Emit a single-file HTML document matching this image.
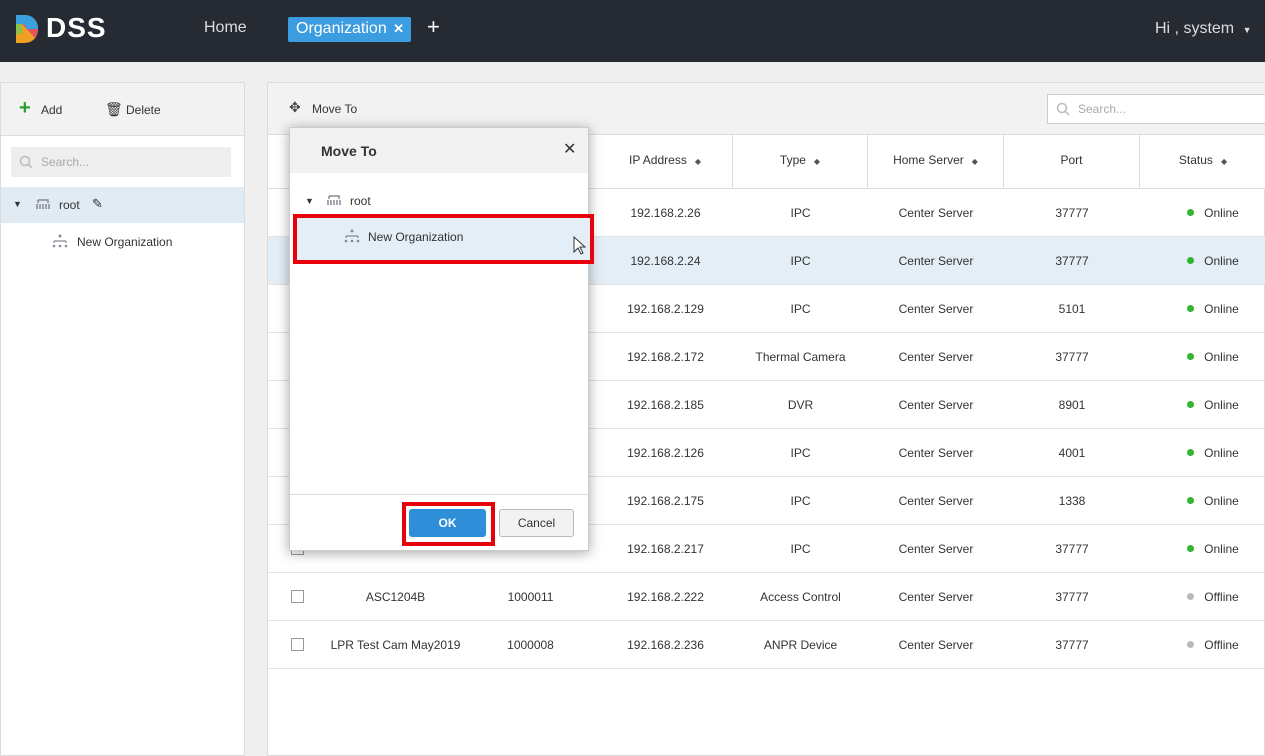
<!DOCTYPE html>
<html><head><meta charset="utf-8"><style>
*{box-sizing:border-box;margin:0;padding:0}
body{width:1265px;height:756px;position:relative;overflow:hidden;font-family:"Liberation Sans",sans-serif;background:#efefef;font-size:12px;color:#333}
.abs{position:absolute}
#hdr{left:0;top:0;width:1265px;height:62px;background:#262b33}
#left{left:0;top:82px;width:245px;height:674px;background:#fff;border:1px solid #dcdcdc}
#right{left:267px;top:82px;width:998px;height:674px;background:#fff;border:1px solid #dcdcdc}
.row{position:absolute;left:0;width:998px;height:48px;border-bottom:1px solid #e3e3e3}
.c{position:absolute;top:0;height:48px;line-height:48px;text-align:center;font-size:12px;color:#333}
.dot{display:inline-block;width:7px;height:7px;border-radius:50%;background:#2fb52f;margin-right:10px;vertical-align:1px}
.cb{position:absolute;left:23px;top:17px;width:13px;height:13px;border:1px solid #999;background:#fff}
.th{position:absolute;top:0;height:54px;line-height:50px;text-align:center;border-right:1px solid #ddd;font-size:12px;color:#333}
.s{font-size:8px;color:#555;margin-left:8px}
</style></head><body>
<div id="hdr" class="abs">
 <svg class="abs" style="left:14px;top:13px" width="26" height="32" viewBox="0 0 26 32"><path d="M2 2h8c9 0 14 6 14 14s-5 14-14 14H2z" fill="#f0a020"/><path d="M2 2h8c9 0 14 6 14 14H12c0-3-1-5-4-5H2z" fill="#3aa0e0"/><path d="M2 11h6v10H2z" fill="#8bc34a"/><path d="M8 11c3 0 4 2 4 5h12c0 4-1 7-3 9z" fill="#e04070" opacity=".8"/></svg>
 <div class="abs" style="left:46px;top:12px;font-size:28px;font-weight:bold;color:#fff;letter-spacing:1px">DSS</div>
 <div class="abs" style="left:204px;top:19px;font-size:16px;color:#ddd">Home</div>
 <div class="abs" style="left:288px;top:17px;width:123px;height:25px;background:#3b9de0;border-radius:2px;color:#fff;font-size:16px;line-height:24px;padding-left:8px">Organization <span style="font-size:13px;font-weight:bold;margin-left:2px">✕</span></div>
 <div class="abs" style="left:427px;top:14px;font-size:22px;color:#fff">+</div>
 <div class="abs" style="left:1155px;top:20px;font-size:16px;color:#ddd">Hi , system <span style="font-size:9px;margin-left:4px">▼</span></div>
</div>
<div id="left" class="abs">
 <div class="abs" style="left:0;top:0;width:243px;height:53px;background:#f2f2f2;border-bottom:1px solid #ddd"></div>
 <div class="abs" style="left:18px;top:14px;font-size:20px;color:#2a9d2a;font-weight:bold">+</div>
 <div class="abs" style="left:40px;top:20px">Add</div>
 <div class="abs" style="left:104px;top:18px;font-size:14px">🗑</div>
 <div class="abs" style="left:125px;top:20px">Delete</div>
 <div class="abs" style="left:10px;top:64px;width:220px;height:30px;background:#eee;color:#aaa;line-height:30px;padding-left:30px">Search...</div>
 <svg class="abs" style="left:18px;top:72px" width="14" height="14"><circle cx="6" cy="6" r="4.5" fill="none" stroke="#bbb" stroke-width="1.5"/><path d="M9 9l4 4" stroke="#bbb" stroke-width="1.5"/></svg>
 <div class="abs" style="left:0;top:104px;width:243px;height:36px;background:#e1ebf3"></div>
 <div class="abs" style="left:12px;top:116px;font-size:9px">▼</div>
 <svg class="abs" style="left:34px;top:115px" width="16" height="12"><path d="M3 2h10v3M3 2v3M2 6v5M5 6v5M8 6v5M11 6v5M14 6v5" stroke="#889" stroke-width="1.5" fill="none"/></svg>
 <div class="abs" style="left:58px;top:115px">root</div>
 <div class="abs" style="left:91px;top:113px;font-size:13px">✎</div>
 <svg class="abs" style="left:51px;top:151px" width="16" height="14"><circle cx="8" cy="2" r="1.5" fill="#889"/><path d="M2 7h12M2 7v2M14 7v2" stroke="#889" stroke-width="1.3" fill="none"/><circle cx="2" cy="12" r="1.3" fill="#889"/><circle cx="8" cy="12" r="1.3" fill="#889"/><circle cx="14" cy="12" r="1.3" fill="#889"/></svg>
 <div class="abs" style="left:76px;top:152px">New Organization</div>
</div>
<div id="right" class="abs">
 <div class="abs" style="left:0;top:0;width:997px;height:52px;background:#f2f2f2;border-bottom:1px solid #ddd"></div>
 <div class="abs" style="left:21px;top:16px;font-size:14px;color:#444">✥</div>
 <div class="abs" style="left:44px;top:19px">Move To</div>
 <div class="abs" style="left:779px;top:11px;width:220px;height:30px;background:#fff;border:1px solid #ccc;color:#aaa;line-height:28px;padding-left:30px">Search...</div>
 <svg class="abs" style="left:788px;top:19px" width="14" height="14"><circle cx="6" cy="6" r="4.5" fill="none" stroke="#bbb" stroke-width="1.5"/><path d="M9 9l4 4" stroke="#bbb" stroke-width="1.5"/></svg>
 <div class="abs" style="left:0;top:52px;width:997px;height:54px;background:#fff;border-bottom:1px solid #ddd">
  <div class="th" style="left:330px;width:135px">IP Address<span class="s">◆</span></div>
  <div class="th" style="left:465px;width:135px">Type<span class="s">◆</span></div>
  <div class="th" style="left:600px;width:136px">Home Server<span class="s">◆</span></div>
  <div class="th" style="left:736px;width:136px">Port</div>
  <div class="th" style="left:872px;width:126px;border:none">Status<span class="s">◆</span></div>
 </div>
 <div id="rows"></div>
</div>
<script>
var d=[["","","192.168.2.26","IPC","37777",1],["","","192.168.2.24","IPC","37777",1],["","","192.168.2.129","IPC","5101",1],["","","192.168.2.172","Thermal Camera","37777",1],["","","192.168.2.185","DVR","8901",1],["","","192.168.2.126","IPC","4001",1],["","","192.168.2.175","IPC","1338",1],["","","192.168.2.217","IPC","37777",1],["ASC1204B","1000011","192.168.2.222","Access Control","37777",0],["LPR Test Cam May2019","1000008","192.168.2.236","ANPR Device","37777",0]];
var h="";d.forEach(function(r,i){h+='<div class="row" style="top:'+(106+i*48)+'px;'+(i==1?'background:#e4eef6':'')+'"><div class="cb"></div><div class="c" style="left:50px;width:155px">'+r[0]+'</div><div class="c" style="left:205px;width:115px">'+r[1]+'</div><div class="c" style="left:330px;width:135px">'+r[2]+'</div><div class="c" style="left:465px;width:135px">'+r[3]+'</div><div class="c" style="left:600px;width:136px">Center Server</div><div class="c" style="left:736px;width:136px">'+r[4]+'</div><div class="c" style="left:882px;width:126px"><span class="dot" style="background:'+(r[5]?'#2fb52f':'#bbb')+'"></span>'+(r[5]?'Online':'Offline')+'</div></div>';});
document.getElementById("rows").innerHTML=h;
</script>
<div class="abs" style="left:289px;top:127px;width:300px;height:424px;background:#fff;border:1px solid #ccc;box-shadow:0 2px 12px rgba(0,0,0,.35)">
 <div class="abs" style="left:0;top:0;width:298px;height:45px;background:#f2f2f2"></div>
 <div class="abs" style="left:31px;top:15px;font-size:14px;font-weight:bold;color:#333">Move To</div>
 <div class="abs" style="left:273px;top:11px;font-size:16px;color:#333">✕</div>
 <div class="abs" style="left:15px;top:68px;font-size:9px">▼</div>
 <svg class="abs" style="left:36px;top:66px" width="16" height="12"><path d="M3 2h10v3M3 2v3M2 6v5M5 6v5M8 6v5M11 6v5M14 6v5" stroke="#889" stroke-width="1.5" fill="none"/></svg>
 <div class="abs" style="left:60px;top:66px">root</div>
 <div class="abs" style="left:3px;top:86px;width:301px;height:50px;border:4px solid #e8000b"></div>
 <div class="abs" style="left:7px;top:90px;width:293px;height:42px;background:#e4eef6"></div>
 <svg class="abs" style="left:54px;top:101px" width="16" height="14"><circle cx="8" cy="2" r="1.5" fill="#889"/><path d="M2 7h12M2 7v2M14 7v2" stroke="#889" stroke-width="1.3" fill="none"/><circle cx="2" cy="12" r="1.3" fill="#889"/><circle cx="8" cy="12" r="1.3" fill="#889"/><circle cx="14" cy="12" r="1.3" fill="#889"/></svg>
 <div class="abs" style="left:78px;top:102px">New Organization</div>
 <svg class="abs" style="left:283px;top:108px" width="14" height="20"><path d="M1 1v15l4-4 3 6 2-1-3-6h5z" fill="#fff" stroke="#333"/></svg>
 <div class="abs" style="left:0;top:366px;width:298px;height:57px;border-top:1px solid #ddd"></div>
 <div class="abs" style="left:112px;top:374px;width:93px;height:44px;border:4px solid #e8000b"></div>
 <div class="abs" style="left:119px;top:381px;width:77px;height:28px;background:#2e8fd8;border-radius:3px;color:#fff;font-weight:bold;text-align:center;line-height:28px">OK</div>
 <div class="abs" style="left:209px;top:381px;width:75px;height:28px;background:#f2f2f2;border:1px solid #bbb;border-radius:3px;text-align:center;line-height:26px">Cancel</div>
</div>
</body></html>
